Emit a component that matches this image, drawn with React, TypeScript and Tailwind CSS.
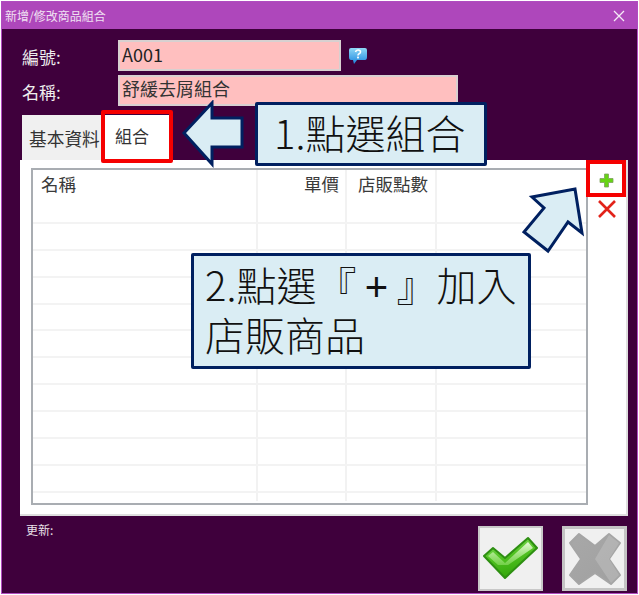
const FONT = "font-['Noto_Sans_CJK_TC','Liberation_Sans',sans-serif]";

function Row({ kind }: { kind: "header" | "body" | "last" }) {
  const size = kind === "header" ? "h-[27px]" : kind === "body" ? "h-[26.9px] border-b-2 border-[#f3f3f3]" : "flex-1";
  const cell = "border-r-2 border-[#f2f2f2] text-[17.5px] leading-[28px] text-[#3a3a3a]";
  return (
    <div className={`grid shrink-0 grid-cols-[225px_89px_90px_1fr] ${size}`}>
      <div className={`${cell} pl-[8px]`}>{kind === "header" ? "名稱" : ""}</div>
      <div className={`${cell} pr-[6px] text-right`}>{kind === "header" ? "單價" : ""}</div>
      <div className={`${cell} whitespace-nowrap pr-[7px] text-right`}>{kind === "header" ? "店販點數" : ""}</div>
      <div />
    </div>
  );
}

function ArrowLeft() {
  return (
    <svg className="absolute left-[180px] top-[100px]" width="68" height="68" viewBox="0 0 68 68">
      <path d="M4 33 L32 3 V18 H62 V47 H32 V64 Z" fill="#daedf4" stroke="#002060" strokeWidth="3" />
    </svg>
  );
}

function ArrowUp() {
  return (
    <svg className="absolute left-[520px] top-[185px]" width="66" height="70" viewBox="0 0 66 70">
      <path d="M55 4 L62 48 L48 37 L28 66 L4 47 L24 23 L12 12 Z" fill="#daedf4" stroke="#002060" strokeWidth="3" />
    </svg>
  );
}

function HelpIcon() {
  return (
    <svg width="20" height="18" viewBox="0 0 20 18">
      <defs>
        <linearGradient id="hb" x1="0" y1="0" x2="0" y2="1">
          <stop offset="0" stopColor="#8fd8f6" />
          <stop offset="1" stopColor="#1c86e0" />
        </linearGradient>
      </defs>
      <path d="M3 1 H17 Q19 1 19 3 V10 Q19 13 17 13 H9 L6 17 L5 13 H3 Q1 13 1 10 V3 Q1 1 3 1 Z" fill="url(#hb)" />
      <path d="M7.5 5 Q8 3 10 3 Q12.5 3 12.5 5 Q12.5 6.3 10.8 7 Q10 7.4 10 8.6" fill="none" stroke="#fff" strokeWidth="1.6" />
      <rect x="9.1" y="9.6" width="1.8" height="1.8" fill="#fff" />
    </svg>
  );
}

function CheckIcon() {
  return (
    <svg width="57" height="45" viewBox="-2 -2 57 45">
      <defs>
        <linearGradient id="cg" x1="0" y1="0" x2="0.3" y2="1">
          <stop offset="0" stopColor="#8be06a" />
          <stop offset="0.5" stopColor="#52c322" />
          <stop offset="1" stopColor="#35a80c" />
        </linearGradient>
        <linearGradient id="ch" x1="0" y1="0" x2="0" y2="1">
          <stop offset="0" stopColor="#eefbe2" stopOpacity="0.95" />
          <stop offset="1" stopColor="#a0e878" stopOpacity="0.5" />
        </linearGradient>
      </defs>
      <path d="M0 18 L9 10 L21 20 L44 0 L53 10 L21 40 Z" fill="url(#cg)" stroke="#2e8f12" strokeWidth="2" strokeLinejoin="round" />
      <path d="M4 18 L9 14 L21 25 L44 4 L49 10 L24 27 L14 27 Z" fill="url(#ch)" />
    </svg>
  );
}

function CrossIcon() {
  return (
    <svg width="54" height="54" viewBox="-1 -1 54 54">
      <defs>
        <linearGradient id="xg" x1="0" y1="0" x2="1" y2="1">
          <stop offset="0" stopColor="#a8a8a8" />
          <stop offset="1" stopColor="#a0a0a0" />
        </linearGradient>
      </defs>
      <path d="M10 1 L26 13 L40 1 L51 10 L40 26 L51 42 L42 51 L26 40 L10 51 L1 42 L12 26 L1 10 Z" fill="url(#xg)" stroke="#a5a5a5" strokeWidth="2" strokeLinejoin="round" />
      <path d="M40 2 L50 10 L40 26 L50 42 L42 50 L26 26 Z" fill="#c0c0c0" opacity="0.55" />
    </svg>
  );
}

export default function App() {
  return (
    <div className={`relative h-[595px] w-[639px] overflow-hidden bg-white pl-[1px] pt-[1px] ${FONT}`}>
      <div className="flex h-[593px] w-[637px] flex-col border border-[#b04cc0] bg-[#3f003c]">
        {/* title bar */}
        <div className="flex h-[27px] shrink-0 items-center justify-between bg-[#ae47bb] pl-[3px] pr-[12px] text-[12px] text-[#f0e0f2]">
          <span>新增/修改商品組合</span>
          <svg width="12" height="12" viewBox="0 0 12 12"><path d="M1 1 L11 11 M11 1 L1 11" stroke="#f5eaf6" strokeWidth="1.3" /></svg>
        </div>

        <div className="flex flex-1 flex-col pl-[18px] pr-[8px]">
          {/* fields */}
          <div className="mt-[11px] flex h-[31px] items-center">
            <span className="w-[98px] pl-[2px] pt-[3px] text-[17px] text-[#eee]">編號:</span>
            <div className="h-[31px] w-[223px] border-2 border-[#d8d0d0] bg-[#ffbfbf] pl-[2px] text-[18px] leading-[25px] text-[#222]">A001</div>
            <span className="ml-[7px] flex"><HelpIcon /></span>
          </div>
          <div className="mt-[4px] flex h-[31px] items-center">
            <span className="w-[98px] pl-[2px] pt-[3px] text-[17px] text-[#eee]">名稱:</span>
            <div className="h-[31px] w-[340px] border-2 border-[#d8d0d0] bg-[#ffbfbf] pl-[2px] text-[18px] leading-[23px] text-[#333]">舒緩去屑組合</div>
          </div>

          {/* tabs */}
          <div className="mt-[9px] flex h-[45px] pl-[2px]">
            <div className="h-[45px] w-[80px] whitespace-nowrap bg-[#f0f0f0] pl-[7px] text-[17.7px] leading-[47px] text-[#333]">基本資料</div>
            <div className="h-[45px] w-[70px] bg-white pl-[13px] text-[17px] leading-[41px] text-[#333]">組合</div>
          </div>

          {/* panel */}
          <div className="flex h-[356px] w-[608px] border-b-2 border-r-2 border-[#dedede] bg-white pl-[11px] pt-[8px]">
            <div className="flex h-[337px] w-[557px] flex-col border-2 border-[#a9adb2] bg-white pb-[2px]">
              <Row kind="header" />
              {Array.from({ length: 11 }).map((_, i) => (
                <Row key={i} kind="body" />
              ))}
              <Row kind="last" />
            </div>
            <div className="flex w-[38px] flex-col items-center pt-[5px]">
              <svg className="ml-[-1px]" width="15" height="15" viewBox="0 0 15 15">
                <path d="M5.5 1 H9.5 V5.5 H14 V9.5 H9.5 V14 H5.5 V9.5 H1 V5.5 H5.5 Z" fill="#66d414" stroke="#7d9f5e" strokeWidth="0.8" />
              </svg>
              <svg className="ml-[-1px] mt-[12px]" width="20" height="18" viewBox="0 0 20 18">
                <path d="M2 1 L18 17 M18 1 L2 17" stroke="#e2231a" strokeWidth="2.6" />
              </svg>
            </div>
          </div>

          {/* footer */}
          <div className="flex flex-1 justify-between pl-[6px] pr-[2px]">
            <span className="mt-[6px] text-[12px] leading-[16px] text-[#e8e0e8]">更新:</span>
            <div className="mt-[10px] flex gap-[19px]">
              <div className="flex h-[65px] w-[65px] items-center justify-center border-2 border-[#c8c8c8] bg-[#f0f0f0]"><CheckIcon /></div>
              <div className="flex h-[65px] w-[65px] items-center justify-center border-[3px] border-[#c4c4c4] bg-[#f0f0f0]"><CrossIcon /></div>
            </div>
          </div>
        </div>
      </div>

      {/* annotations */}
      <div className="absolute left-[101px] top-[110px] h-[53px] w-[72px] rounded-[2px] border-[4px] border-[#f50000]" />
      <div className="absolute left-[586px] top-[160px] h-[37px] w-[40px] border-[4px] border-[#f50000]" />
      <ArrowLeft />
      <ArrowUp />
      <div className="absolute left-[255px] top-[102px] flex h-[64px] w-[232px] items-center whitespace-nowrap rounded-[2px] border-[3px] border-[#002060] bg-[#daedf4] pb-[5px] pl-[16px] text-[40px] font-extralight text-[#111]">
        1.點選組合
      </div>
      <div className="absolute left-[191px] top-[253px] h-[116px] w-[340px] rounded-[2px] border-[3px] border-[#002060] bg-[#daedf4] pl-[11px] pt-[3px] text-[40px] font-extralight leading-[50px] text-[#111]">
        <div className="h-[50px] whitespace-nowrap">2.點選『<span className="inline-block w-[40px] text-center font-['Liberation_Sans'] font-normal leading-[40px]">+</span>』加入</div>
        <div>店販商品</div>
      </div>
    </div>
  );
}
